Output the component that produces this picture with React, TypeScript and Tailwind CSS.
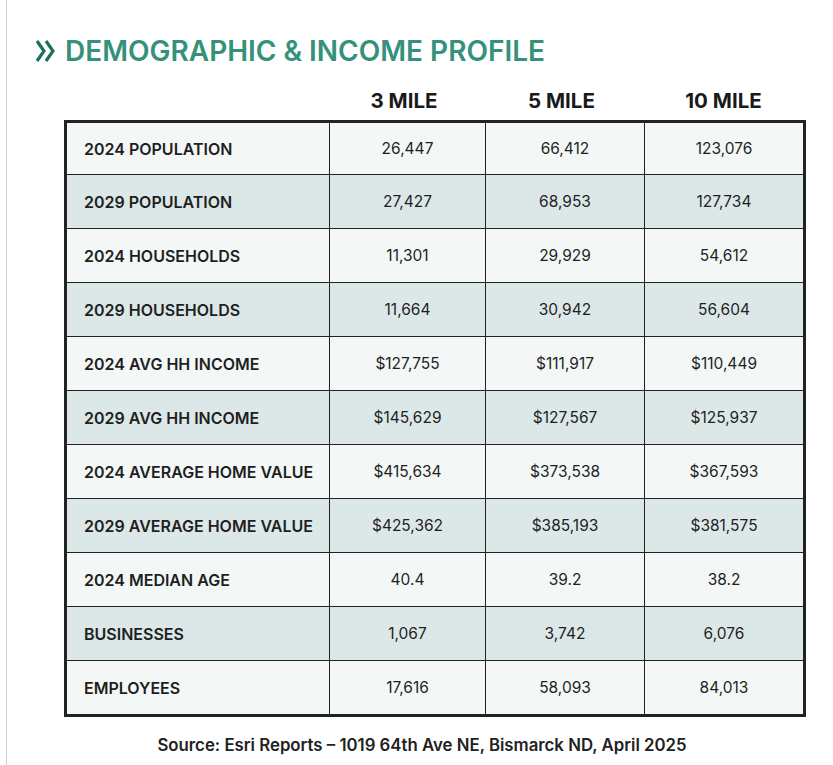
const rows: [string, string, string, string][] = [
  ["2024 POPULATION", "26,447", "66,412", "123,076"],
  ["2029 POPULATION", "27,427", "68,953", "127,734"],
  ["2024 HOUSEHOLDS", "11,301", "29,929", "54,612"],
  ["2029 HOUSEHOLDS", "11,664", "30,942", "56,604"],
  ["2024 AVG HH INCOME", "$127,755", "$111,917", "$110,449"],
  ["2029 AVG HH INCOME", "$145,629", "$127,567", "$125,937"],
  ["2024 AVERAGE HOME VALUE", "$415,634", "$373,538", "$367,593"],
  ["2029 AVERAGE HOME VALUE", "$425,362", "$385,193", "$381,575"],
  ["2024 MEDIAN AGE", "40.4", "39.2", "38.2"],
  ["BUSINESSES", "1,067", "3,742", "6,076"],
  ["EMPLOYEES", "17,616", "58,093", "84,013"],
]

const cols = "grid grid-cols-[262px_156px_159px_1fr]"

export default function App() {
  return (
    <div className="w-[833px] h-[765px] bg-white font-['Inter',sans-serif] text-[#1f1f1f] flex">
      <div className="ml-[6px] w-px bg-[#cfcfcf]" />
      <div className="flex-1 flex flex-col pl-[28px]">
        <div className="flex items-center gap-[8px] pt-[33px] h-[68px]">
          <svg width="22" height="24" viewBox="0 0 22 24" className="shrink-0">
            <polyline points="2,2 9,12 2,22" fill="none" stroke="#1f6f60" strokeWidth="3.2" />
            <polyline points="11,2 18,12 11,22" fill="none" stroke="#1f6f60" strokeWidth="3.2" />
          </svg>
          <h1 className="text-[28px] font-semibold text-[#35917a] leading-none">
            DEMOGRAPHIC &amp; INCOME PROFILE
          </h1>
        </div>
        <div className="ml-[29px] w-[742px]">
          <div className={`${cols} h-[52px] items-center pt-[14px] text-[20.5px] font-bold text-[#1a1a1a]`}>
            <div />
            <div className="text-center">3 MILE</div>
            <div className="text-center">5 MILE</div>
            <div className="text-center">10 MILE</div>
          </div>
          <div className="border-[3px] border-[#222]">
            {rows.map((r, i) => (
              <div
                key={r[0]}
                className={`${cols} ${i === 0 ? "h-[51px]" : "h-[54px] border-t border-[#222]"} text-[15.5px] ${
                  i % 2 === 0 ? "bg-[#f3f8f7]" : "bg-[#dce8e7]"
                }`}
              >
                <div className="flex items-center pl-[17px] text-[16px] font-semibold">{r[0]}</div>
                <div className="flex items-center justify-center border-l border-[#222]">{r[1]}</div>
                <div className="flex items-center justify-center border-l border-[#222]">{r[2]}</div>
                <div className="flex items-center justify-center border-l border-[#222]">{r[3]}</div>
              </div>
            ))}
          </div>
          <div className="text-center pt-[16px] pr-[26px] text-[16.8px] font-semibold text-[#222]">
            Source: Esri Reports – 1019 64th Ave NE, Bismarck ND, April 2025
          </div>
        </div>
      </div>
    </div>
  )
}
